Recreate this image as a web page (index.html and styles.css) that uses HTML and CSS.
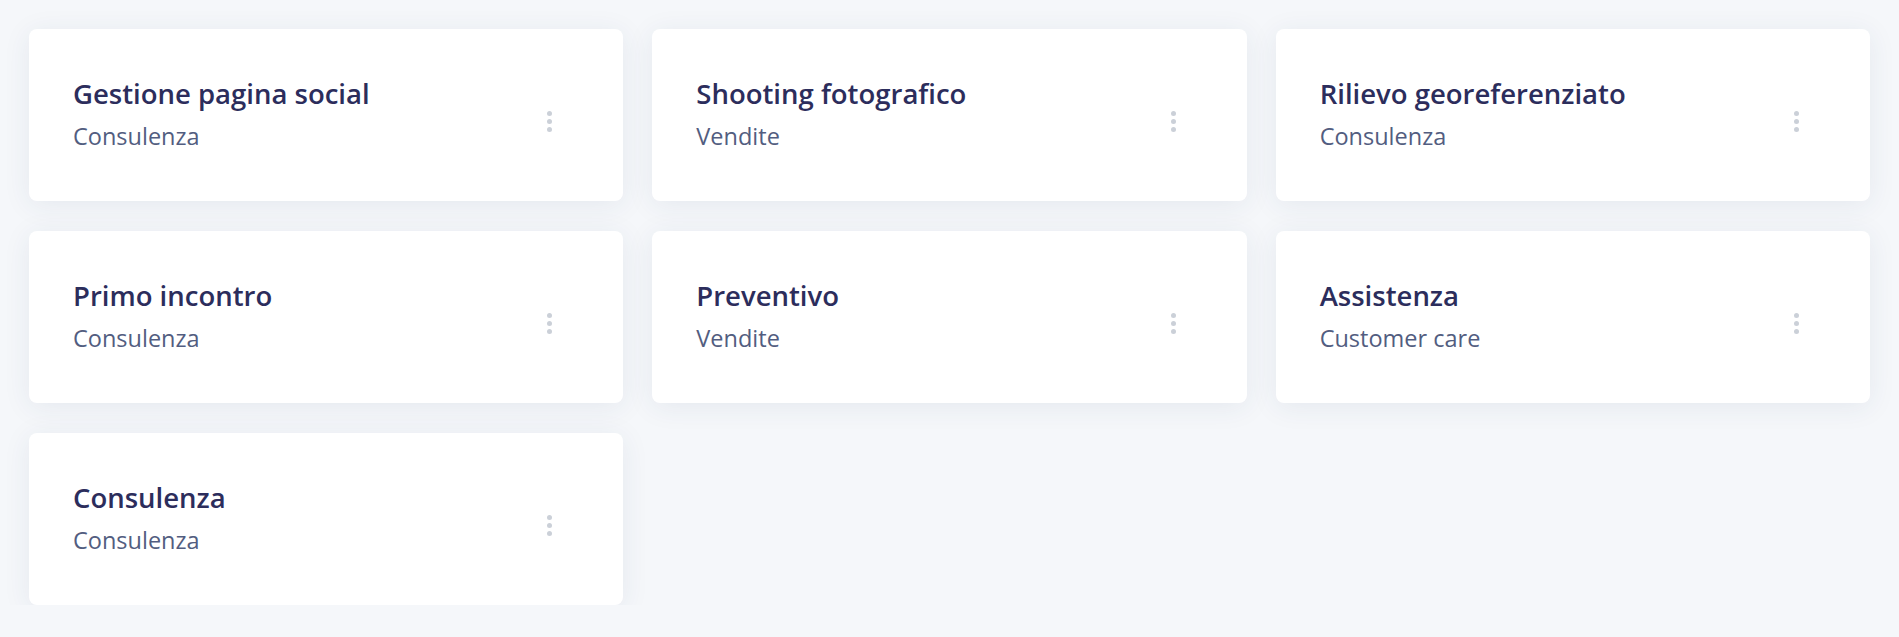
FILE: index.html
```html
<!DOCTYPE html>
<html lang="it">
<head>
<meta charset="utf-8">
<title>Servizi</title>
<link rel="stylesheet" href="styles.css">
</head>
<body>
<main class="grid">
  <div class="card"><div class="info"><div class="title">Gestione pagina social</div><div class="sub">Consulenza</div></div><span class="kebab"><i></i><i></i><i></i></span></div>
  <div class="card"><div class="info"><div class="title">Shooting fotografico</div><div class="sub">Vendite</div></div><span class="kebab"><i></i><i></i><i></i></span></div>
  <div class="card"><div class="info"><div class="title">Rilievo georeferenziato</div><div class="sub">Consulenza</div></div><span class="kebab"><i></i><i></i><i></i></span></div>
  <div class="card"><div class="info"><div class="title">Primo incontro</div><div class="sub">Consulenza</div></div><span class="kebab"><i></i><i></i><i></i></span></div>
  <div class="card"><div class="info"><div class="title">Preventivo</div><div class="sub">Vendite</div></div><span class="kebab"><i></i><i></i><i></i></span></div>
  <div class="card"><div class="info"><div class="title">Assistenza</div><div class="sub">Customer care</div></div><span class="kebab"><i></i><i></i><i></i></span></div>
  <div class="card"><div class="info"><div class="title">Consulenza</div><div class="sub">Consulenza</div></div><span class="kebab"><i></i><i></i><i></i></span></div>
</main>
</body>
</html>
```
FILE: styles.css
```css
html, body {
  margin: 0;
  padding: 0;
  background: #f5f7fa;
  font-family: "Open Sans", "Noto Sans", sans-serif;
}
.grid {
  display: grid;
  grid-template-columns: repeat(3, 1fr);
  gap: 30px 29px;
  padding: 29px 29px 0 29px;
}
.card {
  height: 172px;
  background: #ffffff;
  border-radius: 8px;
  box-shadow: 0 4px 28px rgba(40, 60, 100, 0.08);
  display: flex;
  align-items: center;
  justify-content: space-between;
  padding: 0 71px 0 44px;
}
.info {
  display: flex;
  flex-direction: column;
  gap: 8px;
  margin-top: -2px;
}
.title {
  font-size: 27.5px;
  font-weight: 600;
  color: #2c2d5c;
  line-height: 36px;
}
.sub {
  font-size: 23.5px;
  font-weight: 400;
  color: #525d80;
  line-height: 32px;
}
.kebab {
  display: flex;
  flex-direction: column;
  gap: 3px;
  margin-top: 12px;
}
.kebab i {
  display: block;
  width: 5px;
  height: 5px;
  border-radius: 50%;
  background: #cbd0d8;
}
```
